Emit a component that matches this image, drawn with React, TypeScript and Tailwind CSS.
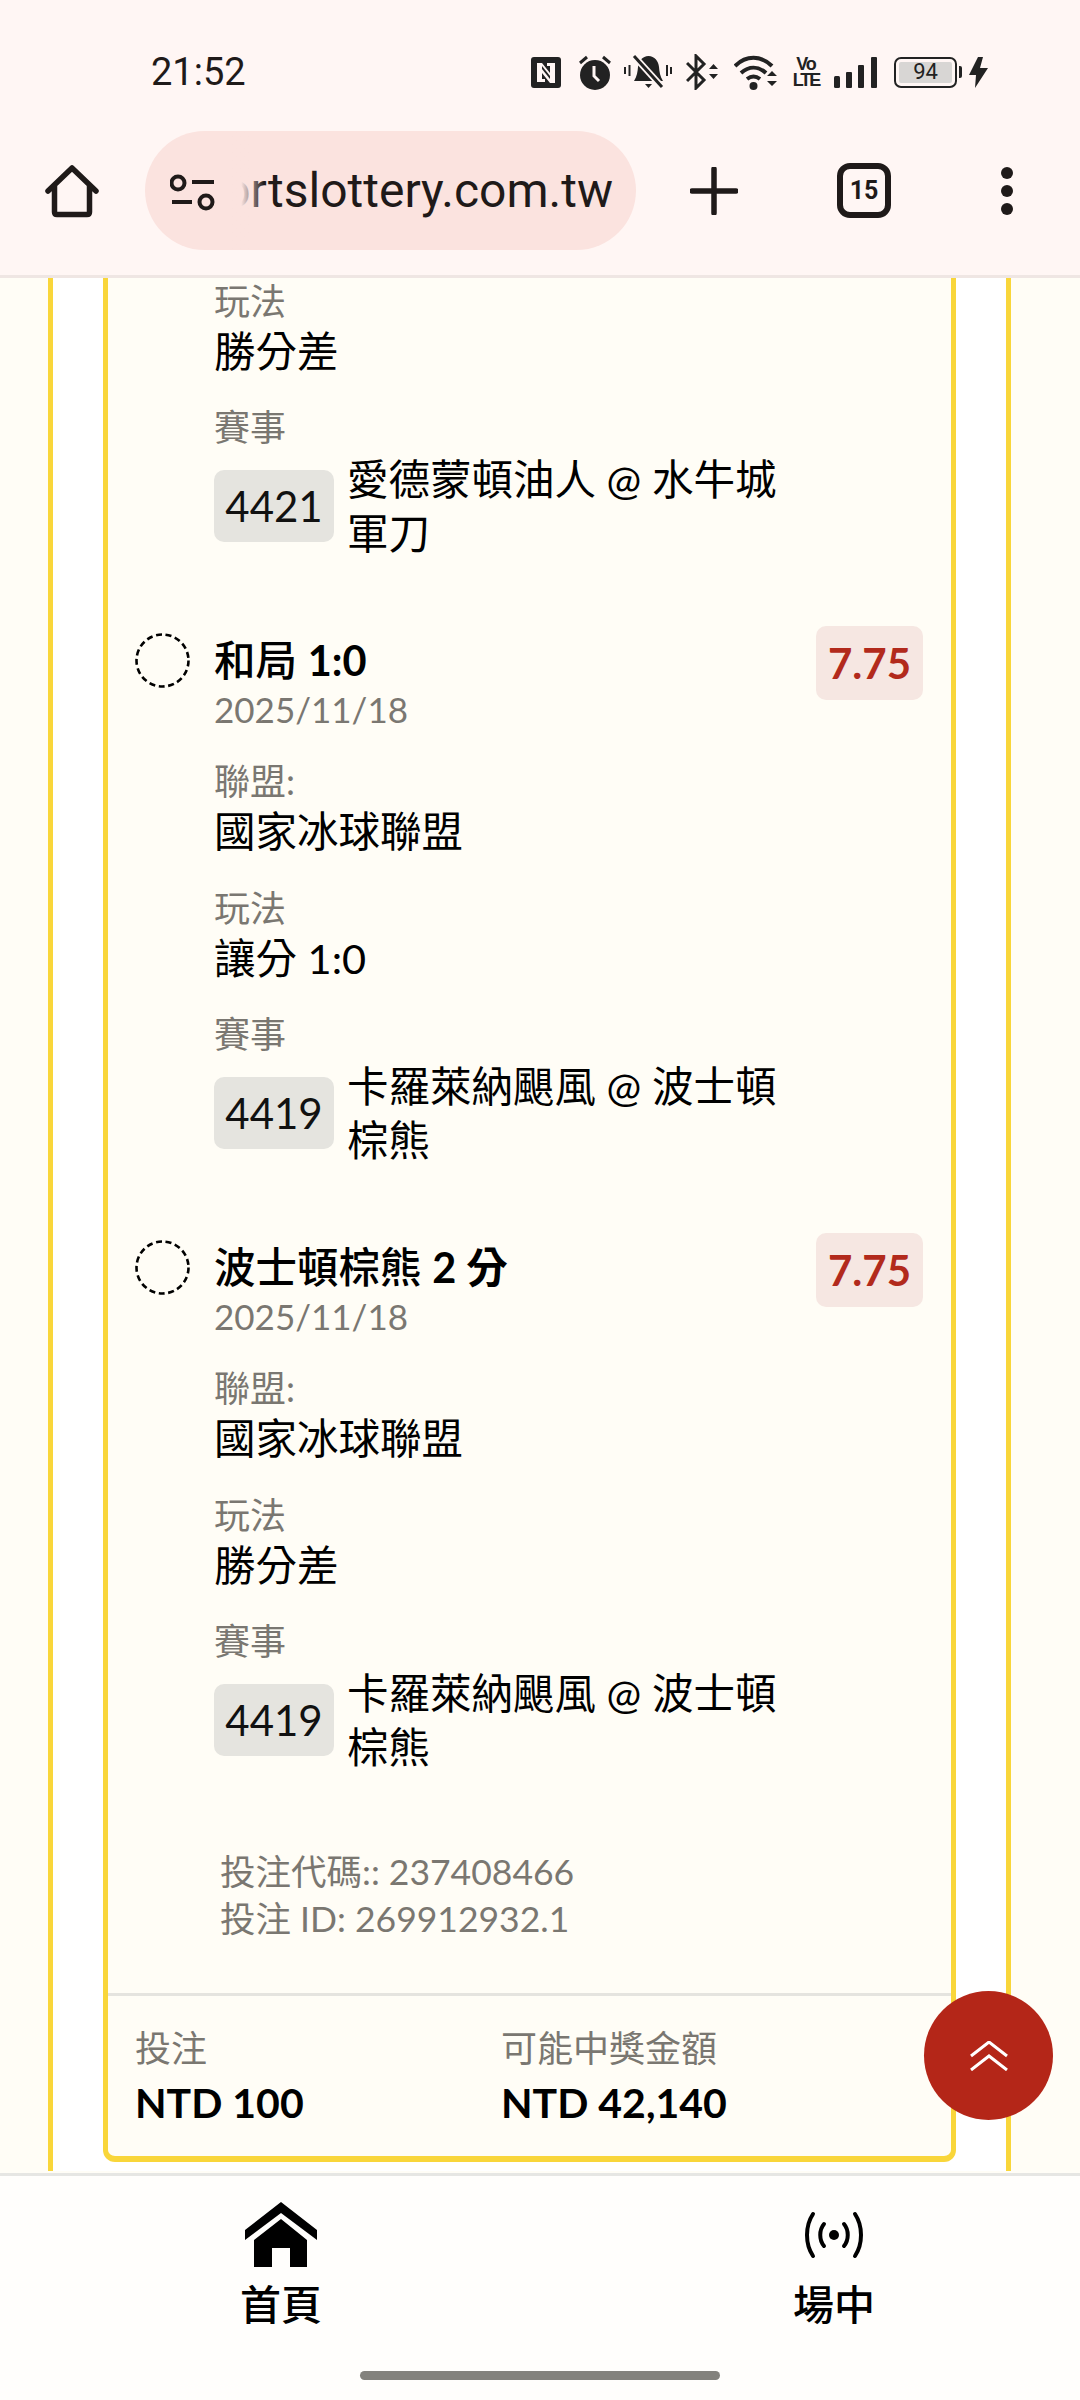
const sans = { fontFamily: '"Lato", "Noto Sans CJK TC", sans-serif' };

const bets = [
  {
    title: "和局",
    titleNote: "1:0",
    market: "讓分 1:0",
    code: "4419",
    match: "卡羅萊納颶風 @ 波士頓棕熊",
  },
  {
    title: "波士頓棕熊",
    titleNote: "2 分",
    market: "勝分差",
    code: "4419",
    match: "卡羅萊納颶風 @ 波士頓棕熊",
  },
];

const Label = ({ children }: { children: React.ReactNode }) => (
  <div className="text-[36px] leading-[50px] text-[#7a7771]">{children}</div>
);

const Value = ({ children }: { children: React.ReactNode }) => (
  <div className="text-[41.500px] leading-[50px] text-black">{children}</div>
);

const MatchRow = ({ code, match }: { code: string; match: string }) => (
  <div className="flex items-center">
    <span className="flex h-[72px] w-[120px] shrink-0 items-center justify-center rounded-[10px] bg-[#e5e4df] text-[42px] text-[#111]">
      {code}
    </span>
    <span className="ml-[13px] w-[440px] text-[41.500px] leading-[54px] text-black">
      {match}
    </span>
  </div>
);

const BetItem = ({
  title,
  titleNote,
  market,
  code,
  match,
}: {
  title: string;
  titleNote: string;
  market: string;
  code: string;
  match: string;
}) => (
  <div className="mt-[73px] flex pl-[27px] pr-[28px]">
    <svg width="55" height="55" viewBox="0 0 55 55" className="shrink-0">
      <circle cx="27.5" cy="27.5" r="26" fill="none" stroke="#000" strokeWidth="2.6" strokeDasharray="6 3.6" />
    </svg>
    <div className="ml-[24px] flex-1">
      <div className="flex items-start justify-between">
        <div>
          <div className="text-[41.500px] leading-[54px] text-black">
            <span className="font-medium">{title}</span> <span className="font-bold">{titleNote}</span>
          </div>
          <div className="text-[35px] leading-[44px] text-[#7a7771]">2025/11/18</div>
        </div>
        <span className="-mt-[7px] flex h-[74px] w-[107px] items-center justify-center rounded-[10px] bg-[#f6e7e2] text-[42px] font-bold text-[#b22a1c]">
          7.75
        </span>
      </div>
      <div className="mt-[25px]">
        <Label>聯盟:</Label>
        <Value>國家冰球聯盟</Value>
      </div>
      <div className="mt-[27px]">
        <Label>玩法</Label>
        <Value>{market}</Value>
      </div>
      <div className="mt-[26px]">
        <Label>賽事</Label>
        <MatchRow code={code} match={match} />
      </div>
    </div>
  </div>
);

const StatusIcons = () => (
  <div className="flex items-center">
    {/* nfc */}
    <svg width="30" height="31" viewBox="0 0 30 31">
      <rect width="30" height="31" rx="3" fill="#222" />
      <path d="M6 25V6h5l8 10V9h-3l0-3h8v20h-5l-8-10v6h3v3z" fill="#fff6f4" />
      <path d="M11 12l8 10v-3l-8-10z" fill="#222" />
    </svg>
    {/* alarm */}
    <svg width="32" height="36" viewBox="0 0 32 36" className="ml-[18px]">
      <circle cx="16" cy="21" r="15" fill="#222" />
      <path d="M15 12v10l5 5" fill="none" stroke="#fff6f4" strokeWidth="3" />
      <path d="M1 9l7-6M31 9l-7-6" stroke="#222" strokeWidth="3" />
    </svg>
    {/* silent bell */}
    <svg width="48" height="36" viewBox="0 0 48 36" className="ml-[13px]">
      <path d="M24.500 2c-6 0-10 5-10.500 11-.4 5-1 9-4 14h29c-3-5-3.600-9-4-14C34.500 7 30.500 2 24.500 2z" fill="#222" />
      <path d="M21 30h7l-3.500 4z" fill="#222" />
      <path d="M10 2l28 31" stroke="#fff6f4" strokeWidth="6.500" />
      <path d="M10 2l28 31" stroke="#222" strokeWidth="3" />
      <path d="M1 13v7M5.500 11v11M43 11v11M47 13v7" stroke="#222" strokeWidth="2" />
    </svg>
    {/* bluetooth with arrows */}
    <svg width="33" height="36" viewBox="0 0 33 36" className="ml-[14px]">
      <path d="M1 9l17 17-8 8V2l8 8L1 27" fill="none" stroke="#222" strokeWidth="3" />
      <path d="M23 15l4.500-5 4.500 5zM23 20l4.500 5 4.500-5z" fill="#222" />
    </svg>
    {/* wifi with arrows */}
    <svg width="45" height="36" viewBox="0 0 45 36" className="ml-[15px]">
      <path d="M1 12c11-11 26-11 37 0M7 19c8-7 17-7 25 0M13 25c4-3 9-3 13 0" fill="none" stroke="#222" strokeWidth="4" />
      <circle cx="19.500" cy="32" r="4" fill="#222" />
      <path d="M33 22l5-5 5 5zM33 27l5 5 5-5z" fill="#222" />
    </svg>
    {/* volte */}
    <div
      className="ml-[16px] flex w-[22px] flex-col items-center text-[18px] font-bold leading-[16px] text-[#222]"
      style={{ fontFamily: '"Liberation Sans", sans-serif' }}
    >
      <span className="tracking-[-1px]">Vo</span>
      <span className="tracking-[-2px]">LTE</span>
    </div>
    {/* signal */}
    <svg width="43" height="31" viewBox="0 0 43 31" className="ml-[17px]">
      <rect x="0" y="19" width="6" height="12" rx="1.500" fill="#222" />
      <rect x="12" y="15" width="6" height="16" rx="1" fill="#222" />
      <rect x="24" y="8" width="6" height="23" rx="1" fill="#222" />
      <rect x="37" y="0" width="6" height="31" rx="1" fill="#222" />
    </svg>
    {/* battery */}
    <div className="ml-[17px] flex items-center">
      <div className="flex h-[31px] w-[63px] rounded-[7px] border-[2px] border-[#222] p-[3px]">
        <div
          className="flex flex-1 items-center justify-center rounded-[2px] bg-[#d8d6d4] text-[22px] leading-none text-[#222]"
          style={{ fontFamily: "Roboto, sans-serif" }}
        >
          94
        </div>
      </div>
      <div className="ml-[2px] h-[12px] w-[3px] rounded-r-[2px] bg-[#222]" />
    </div>
    {/* bolt */}
    <svg width="19" height="31" viewBox="0 0 19 31" className="ml-[7px]">
      <path d="M9 0L0 18h7l-1 13 13-20h-8l3-11z" fill="#222" />
    </svg>
  </div>
);

const BrowserBar = () => (
  <div className="h-[278px] shrink-0 border-b-[3px] border-[#efe6e3] bg-[#fff6f4] text-[#1f1a19]">
    <div className="flex h-[131px] items-start justify-between pl-[151px] pr-[92px] pt-[54px]">
      <span className="text-[38px] leading-[36px]" style={{ fontFamily: "Roboto, sans-serif" }}>
        21:52
      </span>
      <StatusIcons />
    </div>
    <div className="flex h-[119px] items-center">
      <svg width="54" height="56" viewBox="0 0 54 56" className="ml-[45px]">
        <path
          d="M3 28L27 5l24 23M9.500 22v27q0 2.500 2.500 2.500h30q2.500 0 2.500-2.500V22"
          fill="none"
          stroke="#1f1a19"
          strokeWidth="5.500"
          strokeLinejoin="round"
          strokeLinecap="round"
        />
      </svg>
      <div className="ml-[46px] flex h-[119px] w-[491px] items-center overflow-hidden rounded-full bg-[#fbe3df]">
        <svg width="46" height="40" viewBox="0 0 46 40" className="ml-[25px] shrink-0">
          <circle cx="8" cy="12" r="6.500" fill="none" stroke="#1f1a19" strokeWidth="4" />
          <circle cx="36" cy="31" r="6.500" fill="none" stroke="#1f1a19" strokeWidth="4" />
          <path d="M22 11h22M2 31h20" stroke="#1f1a19" strokeWidth="4" />
        </svg>
        <div className="relative ml-[10px] flex h-full min-w-0 flex-1 items-center justify-end overflow-hidden pr-[23px]">
          <span className="whitespace-nowrap text-[48px]" style={{ fontFamily: "Roboto, sans-serif" }}>
            sportslottery.com.tw
          </span>
          <div className="absolute inset-y-0 left-0 w-[38px] bg-gradient-to-r from-[#fbe3df] from-40% to-transparent" />
        </div>
      </div>
      <svg width="48" height="48" viewBox="0 0 48 48" className="ml-[54px]">
        <path d="M24 2v44M2 24h44" stroke="#1f1a19" strokeWidth="5.500" strokeLinecap="round" />
      </svg>
      <div
        className="ml-[99px] flex h-[55px] w-[54px] items-center justify-center rounded-[13px] border-[6px] border-[#1f1a19] text-[25px] font-bold"
        style={{ fontFamily: "Roboto, sans-serif" }}
      >
        15
      </div>
      <div className="ml-[110px] flex flex-col gap-[6px]">
        <span className="h-[12px] w-[12px] rounded-full bg-[#1f1a19]" />
        <span className="h-[12px] w-[12px] rounded-full bg-[#1f1a19]" />
        <span className="h-[12px] w-[12px] rounded-full bg-[#1f1a19]" />
      </div>
    </div>
  </div>
);

const BottomNav = () => (
  <div className="h-[227px] shrink-0 border-t-[3px] border-[#e6e6e3] bg-[#fffefc]">
    <div className="flex justify-between pl-[221px] pr-[186px] pt-[26px]">
      <div className="flex w-[120px] flex-col items-center">
        <svg width="72" height="66" viewBox="0 0 72 66">
          <path d="M36 0L72 28v10L36 11 0 38V28z" fill="#000" />
          <path d="M36 17l26 21v27H45V46H27v19H9V38z" fill="#000" />
        </svg>
        <span className="mt-[12px] text-[41px] font-medium leading-[50px] text-black">首頁</span>
      </div>
      <div className="flex w-[120px] flex-col items-center">
        <svg width="58" height="66" viewBox="0 0 58 66">
          <circle cx="29" cy="33" r="5" fill="#000" />
          <path
            d="M19 22c-5 6-5 16 0 22M39 22c5 6 5 16 0 22M8 12c-8 12-8 30 0 42M50 12c8 12 8 30 0 42"
            fill="none"
            stroke="#000"
            strokeWidth="4"
            strokeLinecap="round"
          />
        </svg>
        <span className="mt-[12px] text-[41px] font-medium leading-[50px] text-black">場中</span>
      </div>
    </div>
    <div className="mx-auto mt-[41px] h-[9px] w-[360px] rounded-full bg-[#83827d]" />
  </div>
);

export default function App() {
  return (
    <div className="relative flex h-[2400px] w-[1080px] flex-col overflow-hidden bg-[#fffdf6]" style={sans}>
      <BrowserBar />
      <main className="min-h-0 flex-1 overflow-hidden">
        <div className="ml-[48px] mr-[69px] h-full border-x-[5px] border-[#f9d63a] bg-white px-[50px]">
          <div className="rounded-b-[12px] border-x-[5px] border-b-[6px] border-[#f9d63a] bg-[#fffdf6]">
            <div className="-mt-[2px] pl-[106px]">
              <Label>玩法</Label>
              <Value>勝分差</Value>
              <div className="mt-[26px]">
                <Label>賽事</Label>
                <MatchRow code="4421" match="愛德蒙頓油人 @ 水牛城軍刀" />
              </div>
            </div>
            {bets.map((bet) => (
              <BetItem key={bet.title} {...bet} />
            ))}
            <div className="mt-[74px] pl-[112px] text-[35.500px] leading-[47px] text-[#7a7771]">
              <div>投注代碼:: 237408466</div>
              <div>投注 ID: 269912932.1</div>
            </div>
            <div className="mt-[51px] flex border-t-[3px] border-[#e5e4df] pb-[26px] pl-[27px] pt-[27px]">
              <div className="w-[366px]">
                <Label>投注</Label>
                <div className="mt-[3px] text-[41px] font-bold leading-[54px] text-black">NTD 100</div>
              </div>
              <div>
                <Label>可能中獎金額</Label>
                <div className="mt-[3px] text-[41px] font-bold leading-[54px] text-black">NTD 42,140</div>
              </div>
            </div>
          </div>
        </div>
      </main>
      <BottomNav />
      <button className="absolute left-[924px] top-[1991px] flex h-[129px] w-[129px] items-center justify-center rounded-full bg-[#b42618]">
        <svg width="38" height="30" viewBox="0 0 38 30">
          <path d="M1 15L19 1l18 14M1 29l18-14 18 14" fill="none" stroke="#fff" strokeWidth="3" />
        </svg>
      </button>
    </div>
  );
}
